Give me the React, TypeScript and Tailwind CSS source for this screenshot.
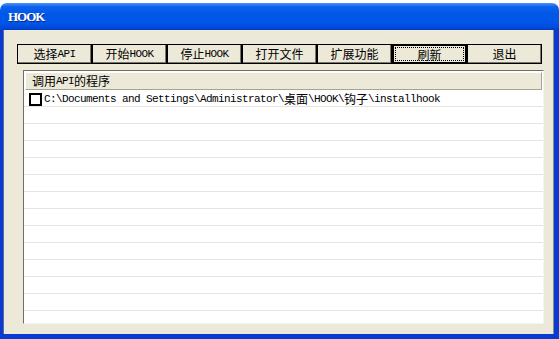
const buttons = ["选择API", "开始HOOK", "停止HOOK", "打开文件", "扩展功能", "刷新", "退出"];

const rows = [
  "C:\\Documents and Settings\\Administrator\\桌面\\HOOK\\钩子\\installhook",
  ...Array(13).fill(""),
];

// SimSun-like text: latin glyphs 6px wide, CJK glyphs 12px wide
const Mixed = ({ text }: { text: string }) => {
  const parts = text.split(/([\u3000-\u9fff\uff00-\uffef]+)/).filter(Boolean);
  return (
    <>
      {parts.map((p, i) =>
        /[\u3000-\u9fff\uff00-\uffef]/.test(p) ? (
          <span key={i} className="font-['Noto_Sans_CJK_SC',sans-serif] text-[12px]">
            {p}
          </span>
        ) : (
          <span
            key={i}
            className="font-['Liberation_Mono',monospace] text-[11px] tracking-[-0.6px] whitespace-pre"
          >
            {p}
          </span>
        )
      )}
    </>
  );
};

const App = () => {
  return (
    <div className="w-[559px] h-[339px] bg-white overflow-hidden pt-[3px]">
      <div className="flex flex-col h-[336px]">
        {/* title bar */}
        <div className="h-[27px] shrink-0 rounded-t-[7px] bg-[linear-gradient(to_bottom,#4a94fb_0%,#0d62ec_14%,#0058e8_40%,#0055e6_75%,#0049d9_92%,#003cc2_100%)] flex items-center pl-[8px] pt-px">
          <span className="font-['Liberation_Serif',serif] font-bold text-[13px] tracking-[-1px] text-white [text-shadow:1px_1px_0_#0a2a8a]">
            HOOK
          </span>
        </div>

        {/* client area */}
        <div className="flex-1 flex flex-col bg-[#ece9d8] border-l-[3px] border-r-[5px] border-b-[5px] border-[#0a3ad0] shadow-[inset_1px_0_0_#5a6a9a,inset_-1px_0_0_#8a8a8a] pl-[14px] pr-[6px] pt-[14px]">
          <div className="flex h-[20px]">
            {buttons.map((b) =>
              b === "刷新" ? (
                <div
                  key={b}
                  className="w-[75px] h-[20px] border-2 border-black bg-[#ece9d8] outline-1 outline-dotted outline-black -outline-offset-4 flex items-center justify-center pt-px text-black leading-none"
                >
                  <Mixed text={b} />
                </div>
              ) : (
                <div
                  key={b}
                  className="w-[75px] h-[20px] border border-black bg-[#ece9d8] shadow-[inset_-1px_-1px_0_#7a7868] flex items-center justify-center text-black leading-none"
                >
                  <Mixed text={b} />
                </div>
              )
            )}
          </div>

          {/* list view */}
          <div className="mt-[6px] ml-[6px] w-[521px] h-[254px] bg-white border border-t-[#716f64] border-l-[#716f64] border-r-[#f4f3ee] border-b-[#f4f3ee] overflow-hidden flex flex-col">
            <div className="h-[18px] shrink-0 mx-px mt-px bg-[#ece9d8] border border-t-white border-l-white border-r-[#a6a392] border-b-[#a6a392] flex items-center pl-[6px] text-black leading-none">
              <Mixed text="调用API的程序" />
            </div>
            {rows.map((r, i) => (
              <div
                key={i}
                className="h-[17px] shrink-0 border-b border-[#e6e4dc] flex items-center pl-[5px] pt-[2px] text-black leading-none"
              >
                {i === 0 && (
                  <>
                    <div className="w-[13px] h-[13px] border-2 border-black bg-white mr-[2px]" />
                    <Mixed text={r} />
                  </>
                )}
              </div>
            ))}
          </div>
        </div>
      </div>
    </div>
  );
};

export default App;
